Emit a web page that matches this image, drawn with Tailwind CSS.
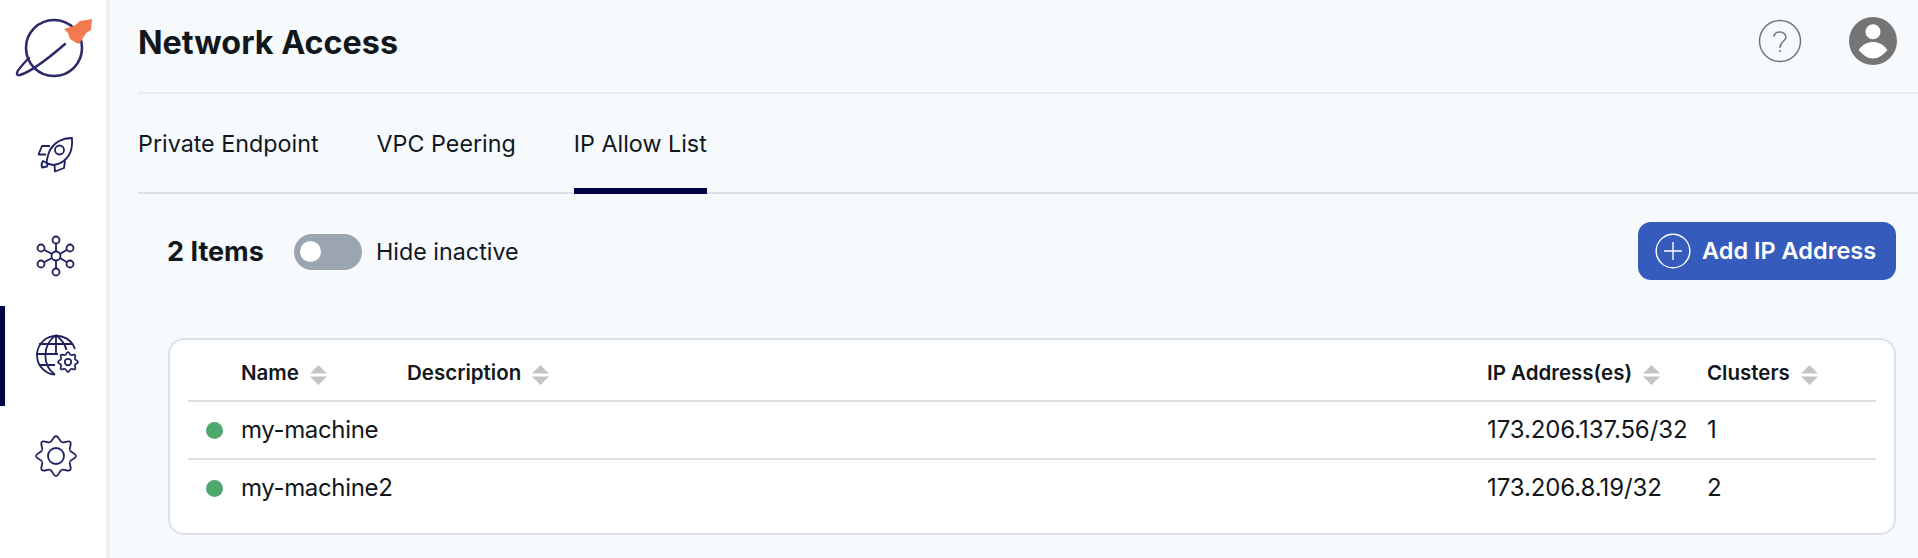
<!DOCTYPE html>
<html lang="en">
<head>
    <meta charset="UTF-8">
    <title>Network Access</title>
    <script src="https://cdn.jsdelivr.net/npm/@tailwindcss/browser@4"></script>
</head>
<body class="h-screen overflow-hidden bg-[#f6fafd] font-[Inter,sans-serif] text-[#12171c]">
    <svg class="hidden">
        <defs>
            <g id="gear-lobes" fill="none">
                <path id="lobe" d="M-5.7 -13.9C-3.4 -14.85 -2.8 -20 0 -20C2.8 -20 3.4 -14.85 5.7 -13.9"/>
                <use href="#lobe" transform="rotate(45)"/>
                <use href="#lobe" transform="rotate(90)"/>
                <use href="#lobe" transform="rotate(135)"/>
                <use href="#lobe" transform="rotate(180)"/>
                <use href="#lobe" transform="rotate(225)"/>
                <use href="#lobe" transform="rotate(270)"/>
                <use href="#lobe" transform="rotate(315)"/>
            </g>
        </defs>
    </svg>

    <div class="flex h-full">
        <!-- Sidebar -->
        <aside class="w-[110px] shrink-0 bg-white border-r-4 border-[#ecf0f5]">
            <div class="h-[106px]">
                <svg width="106" height="105" viewBox="0 0 106 105" fill="none">
                    <circle cx="54" cy="48" r="28" stroke="#2d2a6b" stroke-width="2.6"/>
                    <path d="M65 44C50 57 30 72 20 75C15 76 17 71 20 68C23 64 26 61 29 58" stroke="#2d2a6b" stroke-width="2.4" stroke-linecap="round"/>
                    <path d="M92 19L91 30L86 33L83 38L79 44L75 42L70 39L68 33L64 29L74 26L80 21Z" fill="#f27a4e"/>
                </svg>
            </div>
            <nav class="flex flex-col">
                <a class="h-[100px] flex items-center pl-[27px] border-l-[5px] border-transparent">
                    <svg width="48" height="48" viewBox="32 132 48 48" fill="none" stroke="#20205f" stroke-width="1.8" stroke-linejoin="round">
                        <path d="M72 138C62 138 54 143 50 150C48 154 47 159 46.5 163.5L53.5 165C61 164 66 160 69 155C71.500 151 72.500 145 72 138Z"/>
                        <circle cx="59.500" cy="150" r="4.500"/>
                        <path d="M50 146H42L38.500 154.500H46"/>
                        <path d="M65 161L64 168L55 171.500L54.500 164.500"/>
                        <path d="M43 161L48 163.500L47 166.500L42 167.500C41 165 41.500 163 43 161Z"/>
                    </svg>
                </a>
                <a class="h-[100px] flex items-center pl-[27px] border-l-[5px] border-transparent">
                    <svg width="48" height="48" viewBox="32 231 48 48" fill="none" stroke="#20205f" stroke-width="1.8">
                        <circle cx="56" cy="255" r="4.500"/>
                        <circle cx="56" cy="239" r="3.500"/>
                        <circle cx="56" cy="271" r="3.500"/>
                        <circle cx="41" cy="247" r="3.500"/>
                        <circle cx="70" cy="247" r="3.500"/>
                        <circle cx="41" cy="263" r="3.500"/>
                        <circle cx="70" cy="263" r="3.500"/>
                        <path d="M56 242.500V250.500M56 259.500V267.500M44 248.700L52 253M60 257L67 261.300M44 261.300L52 257M60 253L67 248.700"/>
                    </svg>
                </a>
                <a class="h-[100px] flex items-center pl-[27px] border-l-[5px] border-[#020344]">
                    <svg width="48" height="48" viewBox="32 333 48 48" fill="none" stroke="#20205f" stroke-width="1.8">
                        <path d="M75 350A19.500 19.500 0 1 0 55 375.700"/>
                        <path d="M56 336C42 346 42 366 55 375.700"/>
                        <path d="M56 336C61 340 65 345 66.500 351"/>
                        <path d="M56 336V355"/>
                        <path d="M39 345H72M36 355H58M39 366H55"/>
                        <g transform="translate(68 363) scale(.5)" stroke-width="3.500">
                            <use href="#gear-lobes"/>
                            <circle r="6.500"/>
                        </g>
                    </svg>
                </a>
                <a class="h-[100px] flex items-center pl-[27px] border-l-[5px] border-transparent">
                    <svg width="48" height="48" viewBox="32 432 48 48" fill="none" stroke="#20205f" stroke-width="1.8">
                        <g transform="translate(56 456)">
                            <use href="#gear-lobes"/>
                            <circle r="8"/>
                        </g>
                    </svg>
                </a>
            </nav>
        </aside>

        <!-- Main -->
        <main class="flex-1 pl-[28px] min-w-0">
            <header class="h-[94px] flex items-center justify-between border-b-2 border-[#e9edf1] pr-[21px]">
                <h1 class="text-[32.3px] font-bold leading-[36px] -mt-[6px]">Network Access</h1>
                <div class="flex items-center gap-[47px] -mt-[10px]">
                    <svg width="44" height="44" viewBox="0 0 44 44" fill="none" stroke="#757575" stroke-width="1.5">
                        <circle cx="22" cy="22" r="20.500"/>
                        <path d="M16 17C16.500 14.500 19 13 22 13C25.500 13 28 15.500 28 18.500C28 22 22 22.500 22 28.500" stroke-linecap="round"/>
                        <circle cx="22" cy="32" r="1.100" fill="#757575" stroke="none"/>
                    </svg>
                    <svg width="48" height="48" viewBox="-24 -24 48 48">
                        <circle r="24" fill="#757575"/>
                        <circle cy="-9.300" r="7.500" fill="#fff"/>
                        <path d="M-14.500 9C-10 3 -5 1 0 1C5 1 10 3 14.500 9C10 14 5 17.500 0 17.500C-5 17.500 -10 14 -14.500 9Z" fill="#fff"/>
                    </svg>
                </div>
            </header>

            <div class="flex gap-[58px] h-[100px] border-b-2 border-[#dde1e6] text-[23.3px] leading-[28px]">
                <a class="h-[100px] pt-[36px]">Private Endpoint</a>
                <a class="h-[100px] pt-[36px]">VPC Peering</a>
                <a class="h-[100px] pt-[36px] border-b-[6px] border-[#020344]">IP Allow List</a>
            </div>

            <div class="pl-[30px] pr-[22px]">
                <div class="flex items-center justify-between mt-[28px] h-[58px]">
                    <div class="flex items-center">
                        <span class="text-[27px] font-bold leading-[30px] w-[127px] mt-[1px] -ml-px">2 Items</span>
                        <span class="w-[68px] h-[36px] shrink-0 rounded-full bg-[#9aa5af] pl-[6px] flex items-center mt-[1px]">
                            <span class="w-[21px] h-[21px] rounded-full bg-white"></span>
                        </span>
                        <span class="ml-[14px] text-[23.3px] leading-[28px] mt-[1px]">Hide inactive</span>
                    </div>
                    <button class="w-[258px] h-[58px] rounded-[13px] bg-[#355cbc] text-white flex items-center gap-[11px] pl-[17px] text-[23.5px] font-semibold">
                        <svg width="36" height="36" viewBox="0 0 36 36" fill="none" stroke="#fff" stroke-width="1.4">
                            <circle cx="18" cy="18" r="16.800"/>
                            <path d="M18 9V27M9 18H27"/>
                        </svg>
                        Add IP Address
                    </button>
                </div>

                <!-- Table -->
                <div class="mt-[58px] h-[197px] bg-white border-2 border-[#dde2e8] rounded-[16px] px-[18px]">
                    <div class="grid grid-cols-[53px_166px_1080px_220px_1fr] items-center h-[62px] pt-[6px] border-b-2 border-[#dde1e6] text-[20.5px] font-semibold">
                        <span></span>
                        <span class="flex items-center gap-[11px]">Name
                            <svg width="17" height="20" viewBox="0 0 17 20" fill="#c4c4c4" class="mt-[3px]"><path d="M8.500 0L17 8.500H0ZM0 11.500H17L8.500 20Z"/></svg>
                        </span>
                        <span class="flex items-center gap-[11px]">Description
                            <svg width="17" height="20" viewBox="0 0 17 20" fill="#c4c4c4" class="mt-[3px]"><path d="M8.500 0L17 8.500H0ZM0 11.500H17L8.500 20Z"/></svg>
                        </span>
                        <span class="flex items-center gap-[11px]">IP Address(es)
                            <svg width="17" height="20" viewBox="0 0 17 20" fill="#c4c4c4" class="mt-[3px]"><path d="M8.500 0L17 8.500H0ZM0 11.500H17L8.500 20Z"/></svg>
                        </span>
                        <span class="flex items-center gap-[11px]">Clusters
                            <svg width="17" height="20" viewBox="0 0 17 20" fill="#c4c4c4" class="mt-[3px]"><path d="M8.500 0L17 8.500H0ZM0 11.500H17L8.500 20Z"/></svg>
                        </span>
                    </div>
                    <div class="grid grid-cols-[53px_166px_1080px_220px_1fr] items-center h-[58px] border-b-2 border-[#dde1e6] text-[24px] tracking-[-0.1px]">
                        <span class="pl-[18px]"><span class="block w-[17px] h-[17px] rounded-full bg-[#4ea76c]"></span></span>
                        <span class="whitespace-nowrap tracking-[-0.35px]">my-machine</span>
                        <span></span>
                        <span>173.206.137.56/32</span>
                        <span>1</span>
                    </div>
                    <div class="grid grid-cols-[53px_166px_1080px_220px_1fr] items-center h-[56px] text-[24px] tracking-[-0.1px]">
                        <span class="pl-[18px]"><span class="block w-[17px] h-[17px] rounded-full bg-[#4ea76c]"></span></span>
                        <span class="whitespace-nowrap tracking-[-0.35px]">my-machine2</span>
                        <span></span>
                        <span>173.206.8.19/32</span>
                        <span>2</span>
                    </div>
                </div>
            </div>
        </main>
    </div>
</body>
</html>
